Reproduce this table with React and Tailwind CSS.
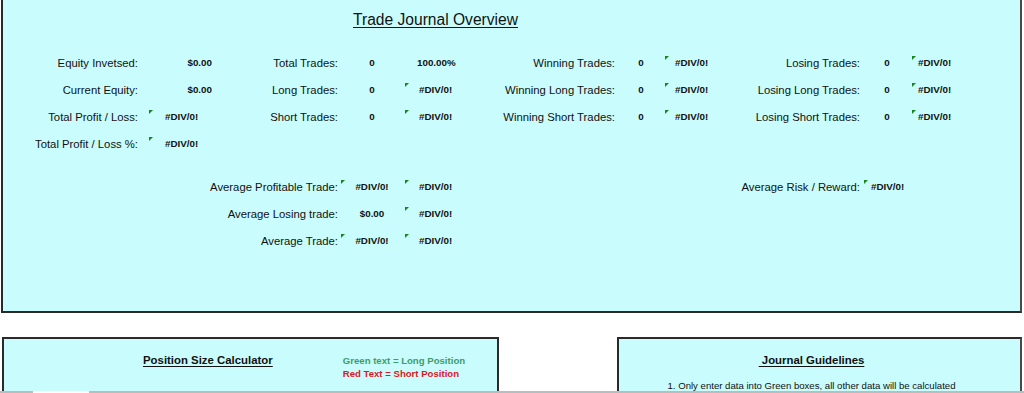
import React from "react";

const FONT = { fontFamily: '"Liberation Sans", Arial, sans-serif' };

const Tri = ({ className = "left-0" }) => (
  <span
    className={`absolute top-[6px] w-0 h-0 border-t-[4px] border-t-[#17861c] border-r-[4px] border-r-transparent ${className}`}
  />
);

const L = ({ children, pr = "pr-[2px]" }) => (
  <div className={`flex items-center justify-end text-[11.3px] text-[#111] whitespace-nowrap ${pr}`}>
    {children}
  </div>
);

const V = ({ children, tri, triPos, cls = "justify-center" }) => (
  <div className={`relative flex items-center font-bold text-[9.8px] text-[#111] whitespace-nowrap ${cls}`}>
    {tri && <Tri className={triPos || "left-0"} />}
    {children}
  </div>
);

const E = () => <div />;

const COLS =
  "grid grid-cols-[145px_74px_118px_64px_64px_149px_48px_55px_142px_50px_58px] auto-rows-[27px]";

export default function App() {
  return (
    <div className="relative h-[393px] overflow-hidden bg-white" style={FONT}>
      {/* Top overview panel */}
      <div className="ml-[1px] mr-[2px] h-[313px] bg-[#c9fdfd] border-l-2 border-r-2 border-b-2 border-[#2a2a2a] border-r-[#4a4a4a]">
        <div className="pt-[10px] flex pl-[350px]">
          <span className="text-[15.6px] leading-[20px] underline underline-offset-[2px] text-[#111]">
            Trade Journal Overview
          </span>
        </div>

        <div className={`${COLS} mt-[20px]`}>
          {/* Row 1 */}
          <L pr="pr-[10px]">Equity Invetsed:</L>
          <V cls="justify-end pr-[10px]">$0.00</V>
          <L>Total Trades:</L>
          <V>0</V>
          <V cls="justify-start pl-[13px]">100.00%</V>
          <L>Winning Trades:</L>
          <V>0</V>
          <V tri cls="justify-start pl-[10px]">#DIV/0!</V>
          <L>Losing Trades:</L>
          <V>0</V>
          <V tri cls="justify-start pl-[6px]">#DIV/0!</V>

          {/* Row 2 */}
          <L pr="pr-[10px]">Current Equity:</L>
          <V cls="justify-end pr-[10px]">$0.00</V>
          <L>Long Trades:</L>
          <V>0</V>
          <V tri triPos="left-[1px]" cls="justify-start pl-[15px]">#DIV/0!</V>
          <L>Winning Long Trades:</L>
          <V>0</V>
          <V tri cls="justify-start pl-[10px]">#DIV/0!</V>
          <L>Losing Long Trades:</L>
          <V>0</V>
          <V tri cls="justify-start pl-[6px]">#DIV/0!</V>

          {/* Row 3 */}
          <L pr="pr-[10px]">Total Profit / Loss:</L>
          <V tri triPos="left-[1px]" cls="justify-start pl-[17px]">#DIV/0!</V>
          <L>Short Trades:</L>
          <V>0</V>
          <V tri triPos="left-[1px]" cls="justify-start pl-[15px]">#DIV/0!</V>
          <L>Winning Short Trades:</L>
          <V>0</V>
          <V tri cls="justify-start pl-[10px]">#DIV/0!</V>
          <L>Losing Short Trades:</L>
          <V>0</V>
          <V tri cls="justify-start pl-[6px]">#DIV/0!</V>

          {/* Row 4 */}
          <L pr="pr-[10px]">Total Profit / Loss %:</L>
          <V tri triPos="left-[1px]" cls="justify-start pl-[17px]">#DIV/0!</V>
          <E /><E /><E /><E /><E /><E /><E /><E /><E />
        </div>

        <div className={`${COLS} mt-[16px]`}>
          <E /><E />
          <L>Average Profitable Trade:</L>
          <V tri triPos="left-[1px]">#DIV/0!</V>
          <V tri triPos="left-[1px]" cls="justify-start pl-[15px]">#DIV/0!</V>
          <E /><E /><E />
          <L>Average Risk / Reward:</L>
          <V tri triPos="left-[2px]" cls="justify-start pl-[9px]">#DIV/0!</V>
          <E />

          <E /><E />
          <L>Average Losing trade:</L>
          <V>$0.00</V>
          <V tri triPos="left-[1px]" cls="justify-start pl-[15px]">#DIV/0!</V>
          <E /><E /><E /><E /><E /><E />

          <E /><E />
          <L>Average Trade:</L>
          <V tri triPos="left-[1px]">#DIV/0!</V>
          <V tri triPos="left-[1px]" cls="justify-start pl-[15px]">#DIV/0!</V>
          <E /><E /><E /><E /><E /><E />
        </div>
      </div>

      {/* Bottom panels */}
      <div className="flex mt-[24px]">
        <div className="ml-[2px] w-[497px] h-[120px] bg-[#c9fdfd] border-2 border-[#2a2a2a] flex items-start pt-[14px] pl-[139px]">
          <span className="font-bold text-[11.4px] leading-[14px] underline underline-offset-[2px] text-[#111] whitespace-nowrap">
            Position Size Calculator
          </span>
          <div className="ml-[70px] mt-[1px] flex flex-col font-bold text-[9.6px] leading-[13px] whitespace-nowrap">
            <span className="text-[#3c9c6c]">Green text = Long Position</span>
            <span className="text-[#e3141c]">Red Text = Short Position</span>
          </div>
        </div>
        <div className="ml-auto mr-[2px] w-[405px] h-[120px] bg-[#c9fdfd] border-2 border-[#2a2a2a] border-r-[#4a4a4a] flex flex-col items-center pt-[14px] pr-[16px]">
          <span className="font-bold text-[11.4px] leading-[14px] underline underline-offset-[2px] text-[#111] whitespace-pre">
            {" Journal Guidelines"}
          </span>
          <span className="mt-[12px] text-[9.6px] leading-[13px] text-[#111] whitespace-nowrap">
            1. Only enter data into Green boxes, all other data will be calculated
          </span>
        </div>
      </div>

      {/* bottom edge strip */}
      <div className="absolute bottom-0 left-0 right-0 h-[2px] flex">
        <div className="w-[33px] bg-[#b5bfbf]" />
        <div className="w-[56px] bg-white" />
        <div className="flex-1 bg-[#b5bfbf]" />
      </div>
    </div>
  );
}
